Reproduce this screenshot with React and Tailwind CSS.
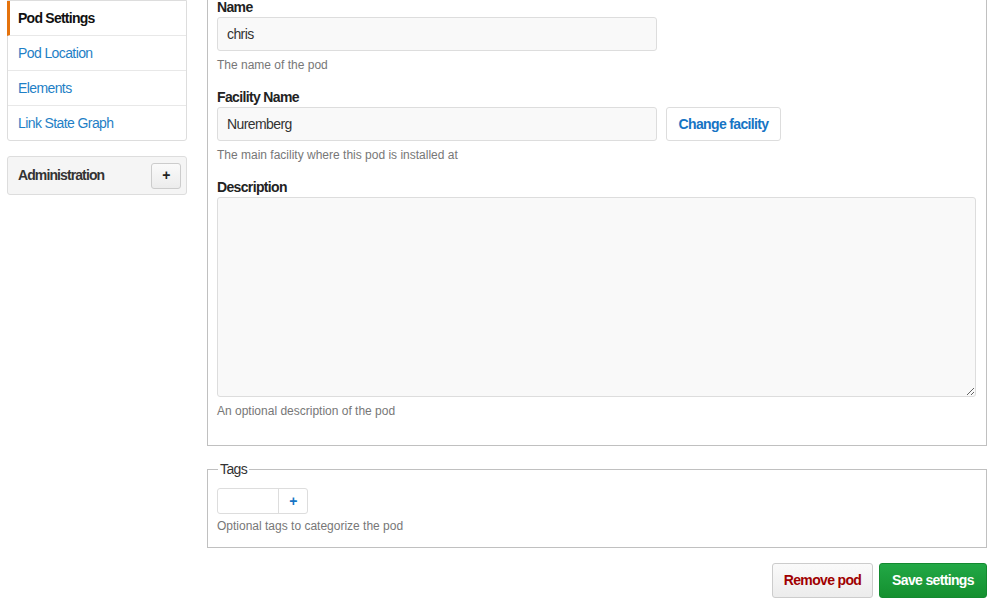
import React from "react";

export default function App() {
  const font = { fontFamily: '"Liberation Sans", Arial, sans-serif' };
  return (
    <div style={font} className="w-[997px] h-[602px] overflow-hidden bg-white text-[14px] tracking-[-0.6px] text-[#333]">
      <div className="flex pl-[7px] items-start">
        {/* Sidebar */}
        <div className="w-[180px] shrink-0">
          <div className="border border-[#ddd] rounded-b-[3px] bg-white">
            <div className="h-[35px] flex items-center pl-[8px] border-l-[3px] border-l-[#e5730d] -ml-px border-b border-b-[#e8e8e8] font-bold tracking-[-0.75px] text-[#111]">
              Pod Settings
            </div>
            <div className="h-[35px] flex items-center pl-[10px] border-b border-[#e8e8e8] text-[#1f7fc6]">Pod Location</div>
            <div className="h-[35px] flex items-center pl-[10px] border-b border-[#e8e8e8] text-[#1f7fc6]">Elements</div>
            <div className="h-[34px] flex items-center pl-[10px] text-[#1f7fc6]">Link State Graph</div>
          </div>
          <div className="mt-[15px] h-[39px] border border-[#ddd] rounded-[3px] bg-[#f5f5f5] flex items-center justify-between pl-[10px] pr-[5px]">
            <span className="font-bold tracking-[-0.9px] text-[#333]">Administration</span>
            <button className="w-[30px] h-[26px] border border-[#ccc] rounded-[3px] bg-gradient-to-b from-[#fafafa] to-[#ececec] flex items-center justify-center font-bold text-[14px] text-[#222]">
              +
            </button>
          </div>
        </div>

        {/* Main */}
        <div className="ml-[20px] w-[780px] shrink-0">
          <fieldset className="border border-t-0 border-[#c0c0c0] pl-[9px] pr-[10px] pb-[25px]">
            <label className="block font-bold tracking-[-0.65px] leading-[15px] mb-[2px] text-[#222]">Name</label>
            <div className="w-[440px] h-[34px] border border-[#ddd] rounded-[3px] bg-[#f9f9f9] flex items-center pl-[9px] text-[#333]">chris</div>
            <div className="mt-[6px] text-[12px] tracking-normal leading-[17px] text-[#777]">The name of the pod</div>

            <label className="block font-bold tracking-[-0.65px] leading-[15px] mb-[2px] mt-[16px] text-[#222]">Facility Name</label>
            <div className="flex gap-[9px]">
              <div className="w-[440px] h-[34px] border border-[#ddd] rounded-[3px] bg-[#f9f9f9] flex items-center pl-[9px] text-[#333]">Nuremberg</div>
              <button className="w-[115px] h-[34px] border border-[#ddd] rounded-[3px] bg-white font-bold tracking-[-0.65px] text-[#1674c4]">Change facility</button>
            </div>
            <div className="mt-[6px] text-[12px] tracking-normal leading-[17px] text-[#777]">The main facility where this pod is installed at</div>

            <label className="block font-bold tracking-[-0.65px] leading-[15px] mb-[2px] mt-[16px] text-[#222]">Description</label>
            <textarea className="block w-[759px] h-[200px] border border-[#ddd] rounded-[3px] bg-[#f9f9f9] outline-none" />
            <div className="mt-[6px] text-[12px] tracking-normal leading-[17px] text-[#777]">An optional description of the pod</div>
          </fieldset>

          <fieldset className="mt-[15px] border border-[#c0c0c0] pl-[9px] pr-[10px] pb-[12px] pt-[10px]">
            <legend className="ml-[1px] px-[2px] text-[14px] leading-[17px] text-[#333]">Tags</legend>
            <div className="flex w-[91px] h-[26px] border border-[#ddd] rounded-[3px]">
              <div className="w-[61px] border-r border-[#ddd]" />
              <div className="flex-1 flex items-center justify-center font-bold text-[14px] text-[#1674c4]">+</div>
            </div>
            <div className="mt-[4px] text-[12px] tracking-normal leading-[17px] text-[#777]">Optional tags to categorize the pod</div>
          </fieldset>

          <div className="mt-[15px] flex justify-end gap-[6px]">
            <button className="w-[101px] h-[35px] border border-[#ccc] rounded-[3px] bg-gradient-to-b from-[#fafafa] to-[#ececec] font-bold tracking-[-0.65px] text-[#a00000]">Remove pod</button>
            <button className="w-[108px] h-[35px] border border-[#138a30] rounded-[3px] bg-gradient-to-b from-[#22a846] to-[#14902f] font-bold tracking-[-0.65px] text-white">Save settings</button>
          </div>
        </div>
      </div>
    </div>
  );
}
